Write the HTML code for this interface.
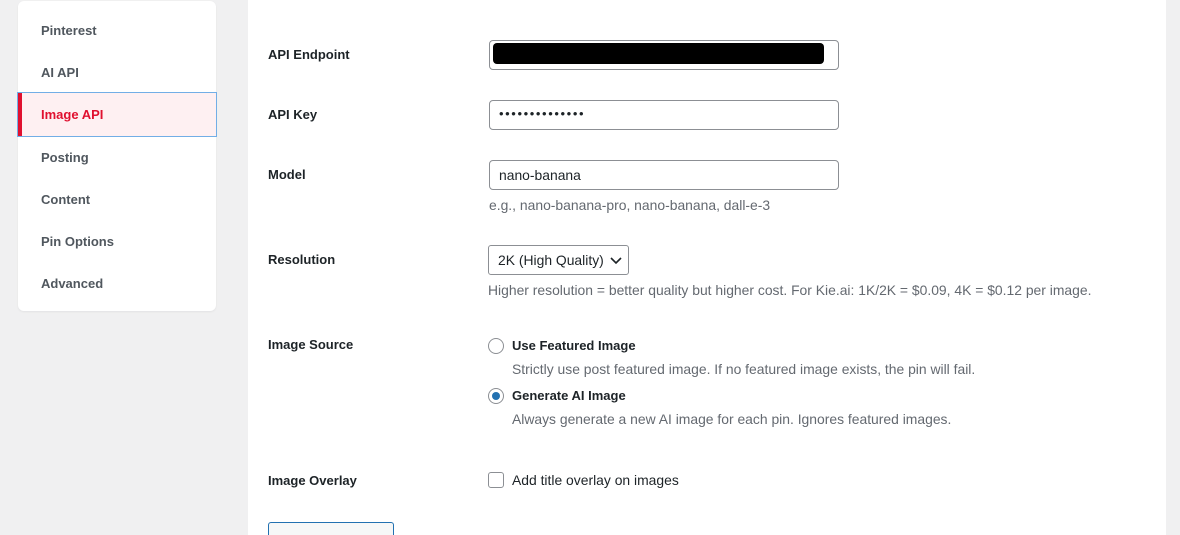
<!DOCTYPE html>
<html style="overflow:hidden;height:535px"><head><style>
body{margin:0;width:1180px;height:535px;background:#f0f0f1;font-family:"Liberation Sans",sans-serif;font-size:13px;color:#1d2327;position:relative;overflow:hidden}
.side{position:absolute;left:18px;top:1px;width:198px;height:310px;background:#fff;border-radius:6px;box-shadow:0 1px 2px rgba(0,0,0,.06)}
.it{position:absolute;left:23px;font-weight:bold;color:#50575e;font-size:13px}
.act{position:absolute;left:-1px;top:91px;width:198px;height:43px;background:#fef0f2;border:1px solid #72aee6}
.act:before{content:"";position:absolute;left:0;top:0;bottom:0;width:4px;background:#e0102f}
.main{position:absolute;left:248px;top:-8px;width:918px;height:560px;background:#fff;border-radius:6px}
.lb{position:absolute;left:268px;font-weight:bold;font-size:13px}
.in{position:absolute;left:489px;width:348px;height:28px;border:1px solid #8c8f94;border-radius:4px;background:#fff;box-sizing:content-box}
.t{position:absolute;font-size:13.9px}
.h{position:absolute;color:#646970;font-size:13.9px}
</style></head><body>
<div class="side">
<div class="it" style="top:22px">Pinterest</div>
<div class="it" style="top:64px">AI API</div>
<div class="act"></div>
<div class="it" style="top:106px;color:#e0102f">Image API</div>
<div class="it" style="top:149px">Posting</div>
<div class="it" style="top:191px">Content</div>
<div class="it" style="top:233px">Pin Options</div>
<div class="it" style="top:275px">Advanced</div>
</div>
<div class="main"></div>
<div class="lb" style="top:47px">API Endpoint</div>
<div class="in" style="top:40px"><div style="position:absolute;left:3px;top:2px;width:331px;height:21px;background:#000;border-radius:4px"></div></div>
<div class="lb" style="top:107px">API Key</div>
<div class="in" style="top:100px"><span style="position:absolute;left:9px;top:5px;font-size:13px;letter-spacing:1.6px;color:#1d2327">••••••••••••••</span></div>
<div class="lb" style="top:167px">Model</div>
<div class="in" style="top:160px"><span style="position:absolute;left:9px;top:6px;font-size:13.9px">nano-banana</span></div>
<div class="h" style="left:489px;top:197px">e.g., nano-banana-pro, nano-banana, dall-e-3</div>
<div class="lb" style="top:252px">Resolution</div>
<div style="position:absolute;left:488px;top:245px;width:139px;height:28px;border:1px solid #8c8f94;border-radius:3px">
<span style="position:absolute;left:9px;top:6px;font-size:13.9px">2K (High Quality)</span>
<svg style="position:absolute;right:6px;top:9px" width="12" height="10" viewBox="0 0 12 10"><path d="M1 3l5 5 5-5" stroke="#1d2327" stroke-width="1.6" fill="none"/></svg></div>
<div class="h" style="left:488px;top:282px">Higher resolution = better quality but higher cost. For Kie.ai: 1K/2K = $0.09, 4K = $0.12 per image.</div>
<div class="lb" style="top:337px">Image Source</div>
<div style="position:absolute;left:488px;top:338px;width:14px;height:14px;border:1px solid #8c8f94;border-radius:50%"></div>
<div class="t" style="left:512px;top:338px;font-weight:bold;font-size:13px">Use Featured Image</div>
<div class="h" style="left:512px;top:361px">Strictly use post featured image. If no featured image exists, the pin will fail.</div>
<div style="position:absolute;left:488px;top:388px;width:14px;height:14px;border:1px solid #8c8f94;border-radius:50%"><div style="position:absolute;left:3px;top:3px;width:8px;height:8px;border-radius:50%;background:#2271b1"></div></div>
<div class="t" style="left:512px;top:388px;font-weight:bold;font-size:13px">Generate AI Image</div>
<div class="h" style="left:512px;top:411px">Always generate a new AI image for each pin. Ignores featured images.</div>
<div class="lb" style="top:473px">Image Overlay</div>
<div style="position:absolute;left:488px;top:472px;width:14px;height:14px;border:1px solid #8c8f94;border-radius:3px"></div>
<div class="t" style="left:512px;top:472px">Add title overlay on images</div>
<div style="position:absolute;left:268px;top:522px;width:124px;height:12px;border:1px solid #2271b1;border-bottom:none;border-radius:3px 3px 0 0;background:#f6f7f7"></div>
</body></html>
